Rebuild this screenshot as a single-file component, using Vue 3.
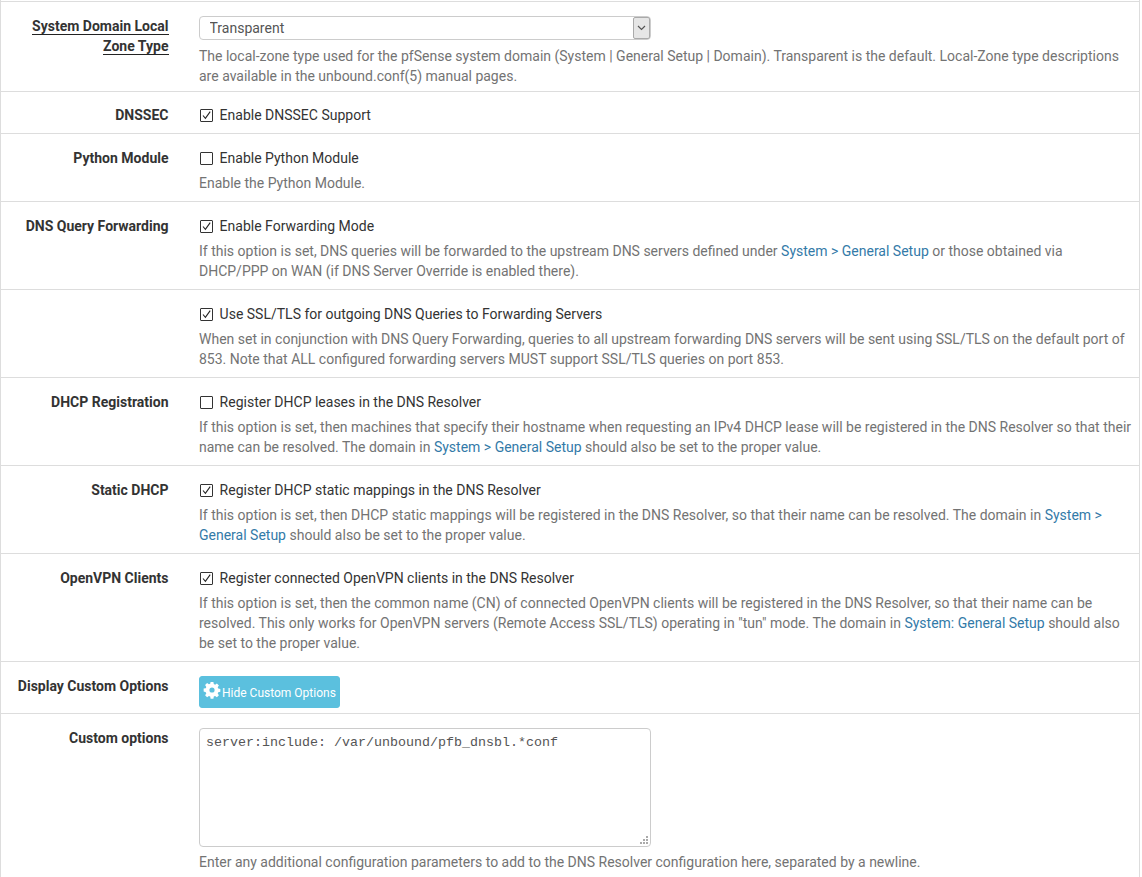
<script setup>
const SYS = 'System > General Setup'
</script>

<template>
  <div class="panel">
    <div class="row r1">
      <div class="label"><span class="under">System Domain Local Zone Type</span></div>
      <div class="body">
        <div class="select-wrap">
          <select class="select"><option>Transparent</option></select>
          <span class="arrow">
            <svg width="9" height="6" viewBox="0 0 9 6"><path d="M1 1l3.5 3.5L8 1" fill="none" stroke="#555" stroke-width="1.2"/></svg>
          </span>
        </div>
        <p class="help">The local-zone type used for the pfSense system domain (System | General Setup | Domain). Transparent is the default. Local-Zone type descriptions are available in the unbound.conf(5) manual pages.</p>
      </div>
    </div>

    <div class="row r2">
      <div class="label">DNSSEC</div>
      <div class="body">
        <label class="check"><span class="box"><svg width="11" height="11" viewBox="0 0 11 11"><path d="M2 5.5l2.4 2.8L9.2 1.6" fill="none" stroke="#222" stroke-width="1.1"/></svg></span>Enable DNSSEC Support</label>
      </div>
    </div>

    <div class="row r3">
      <div class="label">Python Module</div>
      <div class="body">
        <label class="check"><span class="box"></span>Enable Python Module</label>
        <p class="help">Enable the Python Module.</p>
      </div>
    </div>

    <div class="row r4">
      <div class="label">DNS Query Forwarding</div>
      <div class="body">
        <label class="check"><span class="box"><svg width="11" height="11" viewBox="0 0 11 11"><path d="M2 5.5l2.4 2.8L9.2 1.6" fill="none" stroke="#222" stroke-width="1.1"/></svg></span>Enable Forwarding Mode</label>
        <p class="help">If this option is set, DNS queries will be forwarded to the upstream DNS servers defined under <a>{{ SYS }}</a> or those obtained via DHCP/PPP on WAN (if DNS Server Override is enabled there).</p>
      </div>
    </div>

    <div class="row r4">
      <div class="label"></div>
      <div class="body">
        <label class="check"><span class="box"><svg width="11" height="11" viewBox="0 0 11 11"><path d="M2 5.5l2.4 2.8L9.2 1.6" fill="none" stroke="#222" stroke-width="1.1"/></svg></span>Use SSL/TLS for outgoing DNS Queries to Forwarding Servers</label>
        <p class="help">When set in conjunction with DNS Query Forwarding, queries to all upstream forwarding DNS servers will be sent using SSL/TLS on the default port of 853. Note that ALL configured forwarding servers MUST support SSL/TLS queries on port 853.</p>
      </div>
    </div>

    <div class="row r4">
      <div class="label">DHCP Registration</div>
      <div class="body">
        <label class="check"><span class="box"></span>Register DHCP leases in the DNS Resolver</label>
        <p class="help">If this option is set, then machines that specify their hostname when requesting an IPv4 DHCP lease will be registered in the DNS Resolver so that their name can be resolved. The domain in <a>{{ SYS }}</a> should also be set to the proper value.</p>
      </div>
    </div>

    <div class="row r4">
      <div class="label">Static DHCP</div>
      <div class="body">
        <label class="check"><span class="box"><svg width="11" height="11" viewBox="0 0 11 11"><path d="M2 5.5l2.4 2.8L9.2 1.6" fill="none" stroke="#222" stroke-width="1.1"/></svg></span>Register DHCP static mappings in the DNS Resolver</label>
        <p class="help">If this option is set, then DHCP static mappings will be registered in the DNS Resolver, so that their name can be resolved. The domain in <a>{{ SYS }}</a> should also be set to the proper value.</p>
      </div>
    </div>

    <div class="row r8">
      <div class="label">OpenVPN Clients</div>
      <div class="body">
        <label class="check"><span class="box"><svg width="11" height="11" viewBox="0 0 11 11"><path d="M2 5.5l2.4 2.8L9.2 1.6" fill="none" stroke="#222" stroke-width="1.1"/></svg></span>Register connected OpenVPN clients in the DNS Resolver</label>
        <p class="help">If this option is set, then the common name (CN) of connected OpenVPN clients will be registered in the DNS Resolver, so that their name can be resolved. This only works for OpenVPN servers (Remote Access SSL/TLS) operating in "tun" mode. The domain in <a>System: General Setup</a> should also be set to the proper value.</p>
      </div>
    </div>

    <div class="row r9">
      <div class="label">Display Custom Options</div>
      <div class="body">
        <button class="btn">
          <svg class="gear" width="16" height="16" viewBox="0 0 16 16"><path fill="#fff" fill-rule="evenodd" d="M6.6 0h2.8l.4 2.1 1.3.55 1.8-1.2 2 2-1.2 1.8.55 1.3 2.1.4v2.8l-2.1.4-.55 1.3 1.2 1.8-2 2-1.8-1.2-1.3.55-.4 2.1H6.6l-.4-2.1-1.3-.55-1.8 1.2-2-2 1.2-1.8-.55-1.3L-.35 9.4V6.6l2.1-.4.55-1.3-1.2-1.8 2-2 1.8 1.2 1.3-.55zM8 5.4a2.6 2.6 0 1 0 0 5.2 2.6 2.6 0 0 0 0-5.2z"/></svg>
          <span class="btn-text">Hide Custom Options</span>
        </button>
      </div>
    </div>

    <div class="row r10">
      <div class="label">Custom options</div>
      <div class="body">
        <div class="area-wrap">
          <textarea class="area" spellcheck="false">server:include: /var/unbound/pfb_dnsbl.*conf</textarea>
          <svg class="grip" width="8" height="8" viewBox="0 0 8 8"><path fill="#aaa" d="M6 0h2v2H6zM3 3h2v2H3zM6 3h2v2H6zM0 6h2v2H0zM3 6h2v2H3zM6 6h2v2H6z"/></svg>
        </div>
        <p class="help">Enter any additional configuration parameters to add to the DNS Resolver configuration here, separated by a newline.</p>
      </div>
    </div>
  </div>
</template>

<style>
html, body { margin: 0; background: #fff; overflow: hidden; }
</style>

<style scoped>
.panel {
  width: 1140px;
  height: 877px;
  overflow: hidden;
  box-sizing: border-box;
  border-left: 1px solid #ddd;
  border-right: 1px solid #ddd;
  font-family: Roboto, "Liberation Sans", sans-serif;
  font-size: 14px;
  line-height: 20px;
  color: #333;
}
.row {
  display: grid;
  grid-template-columns: 183px 1fr;
  border-top: 1px solid #ddd;
  box-sizing: border-box;
  padding: 14px 0 8px;
}
.r1 { margin-top: 1px; height: 90px; }
.r2 { height: 42px; padding-top: 13px; }
.r3 { height: 68px; }
.r4 { height: 88px; }
.r8 { height: 108px; }
.r9 { height: 52px; }
.label {
  padding-right: 15.5px;
  text-align: right;
  font-weight: 700;
  color: #333;
}
.under { border-bottom: 1px solid #222; }
.body { padding: 0 5px 0 15px; min-width: 0; }
.help { margin: 5px 0 0; color: #737373; }
a { color: #337aa8; text-decoration: none; }
.check { display: flex; align-items: center; color: #333; }
.box {
  width: 13px;
  height: 13px;
  box-sizing: border-box;
  flex: none;
  margin: 0 6.6px 0 1px;
  border: 1px solid #333;
  border-radius: 1px;
  background: #fff;
  display: flex;
  align-items: center;
  justify-content: center;
}
.box svg { display: block; flex: none; }
.select-wrap { position: relative; width: 452px; height: 24px; margin: 0 0 6px; }
.select {
  appearance: none;
  display: block;
  width: 100%;
  height: 24px;
  box-sizing: border-box;
  padding: 0 9.5px;
  border: 1px solid #ccc;
  border-radius: 4px;
  background: #fff;
  font: 14px Roboto, sans-serif;
  color: #555;
}
.arrow {
  position: absolute;
  top: 1px;
  right: 1px;
  bottom: 1px;
  width: 17px;
  background: #e6e6e6;
  border: 1px solid #aaa;
  border-radius: 2px;
  box-sizing: border-box;
  display: flex;
  align-items: center;
  justify-content: center;
}
.btn {
  display: flex;
  align-items: center;
  gap: 2.5px;
  height: 32px;
  width: 141px;
  padding: 0 0 0 3.5px;
  border: 1px solid #5bc0de;
  border-radius: 3px;
  background: #5bc0de;
  color: #fff;
  font: 12px/18px Roboto, sans-serif;
  white-space: nowrap;
}
.btn-text { margin-top: 2px; }
.gear { flex: none; margin-top: -4px; overflow: visible; }
.area-wrap { position: relative; width: 452px; }
.area {
  display: block;
  width: 452px;
  height: 119px;
  box-sizing: border-box;
  padding: 6px;
  border: 1px solid #ccc;
  border-radius: 4px;
  font: 13.33px/15px "Liberation Mono", monospace;
  color: #555;
  outline: none;
  resize: none;
}
.grip { position: absolute; right: 3px; bottom: 3px; }
</style>
